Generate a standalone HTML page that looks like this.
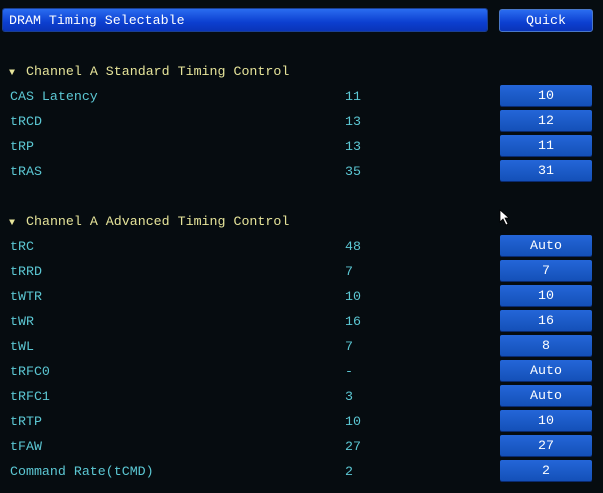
<!DOCTYPE html>
<html><head><style>
body{margin:0;width:603px;height:493px;background:#060c10;overflow:hidden;font-family:"Liberation Mono",monospace;font-size:13.3px;position:relative}
.t{position:absolute;white-space:pre;line-height:16px;margin-top:1px}
.bar{position:absolute;left:3px;top:9px;width:484px;height:22px;background:linear-gradient(#2a6cf0,#0c3fd0 60%,#0a34b8);border-radius:2px;box-shadow:0 0 0 1px #1a3f90}
.q{position:absolute;left:499px;top:9px;width:94px;height:23px;background:linear-gradient(#2a6cf0,#0c3fd0 60%,#0a34b8);border:1px solid #4a78c8;border-radius:3px;box-sizing:border-box;color:#fff;text-align:center;line-height:22px}
.b{position:absolute;left:500px;width:92px;height:21px;background:linear-gradient(#2466d8,#1450b8);border-radius:2px;color:#fff;text-align:center;line-height:22px;box-shadow:0 1px 0 #0a2a70}
.c{color:#5cc8d4}.y{color:#e6e49a}
.tri{display:inline-block;width:17px;font-size:10px}
</style></head><body>
<div class="bar"></div>
<div class="t" style="left:9px;top:12px;color:#fff">DRAM Timing Selectable</div>
<div class="q">Quick</div>
<div class="t y" style="left:9px;top:63px"><span class="tri">▼</span>Channel A Standard Timing Control</div>
<div class="t y" style="left:9px;top:213px"><span class="tri">▼</span>Channel A Advanced Timing Control</div>
<div class="t c" style="left:10px;top:88px">CAS Latency</div><div class="t c" style="left:345px;top:88px">11</div><div class="b" style="top:85px">10</div>
<div class="t c" style="left:10px;top:113px">tRCD</div><div class="t c" style="left:345px;top:113px">13</div><div class="b" style="top:110px">12</div>
<div class="t c" style="left:10px;top:138px">tRP</div><div class="t c" style="left:345px;top:138px">13</div><div class="b" style="top:135px">11</div>
<div class="t c" style="left:10px;top:163px">tRAS</div><div class="t c" style="left:345px;top:163px">35</div><div class="b" style="top:160px">31</div>
<div class="t c" style="left:10px;top:238px">tRC</div><div class="t c" style="left:345px;top:238px">48</div><div class="b" style="top:235px">Auto</div>
<div class="t c" style="left:10px;top:263px">tRRD</div><div class="t c" style="left:345px;top:263px">7</div><div class="b" style="top:260px">7</div>
<div class="t c" style="left:10px;top:288px">tWTR</div><div class="t c" style="left:345px;top:288px">10</div><div class="b" style="top:285px">10</div>
<div class="t c" style="left:10px;top:313px">tWR</div><div class="t c" style="left:345px;top:313px">16</div><div class="b" style="top:310px">16</div>
<div class="t c" style="left:10px;top:338px">tWL</div><div class="t c" style="left:345px;top:338px">7</div><div class="b" style="top:335px">8</div>
<div class="t c" style="left:10px;top:363px">tRFC0</div><div class="t c" style="left:345px;top:363px">-</div><div class="b" style="top:360px">Auto</div>
<div class="t c" style="left:10px;top:388px">tRFC1</div><div class="t c" style="left:345px;top:388px">3</div><div class="b" style="top:385px">Auto</div>
<div class="t c" style="left:10px;top:413px">tRTP</div><div class="t c" style="left:345px;top:413px">10</div><div class="b" style="top:410px">10</div>
<div class="t c" style="left:10px;top:438px">tFAW</div><div class="t c" style="left:345px;top:438px">27</div><div class="b" style="top:435px">27</div>
<div class="t c" style="left:10px;top:463px">Command Rate(tCMD)</div><div class="t c" style="left:345px;top:463px">2</div><div class="b" style="top:460px">2</div>
<svg style="position:absolute;left:499px;top:209px" width="12" height="18"><path d="M1 1 L1 13 L4 10 L7 16 L9 15 L6 9 L10 9 Z" fill="#fff" stroke="#000" stroke-width="0.8"/></svg>
</body></html>
